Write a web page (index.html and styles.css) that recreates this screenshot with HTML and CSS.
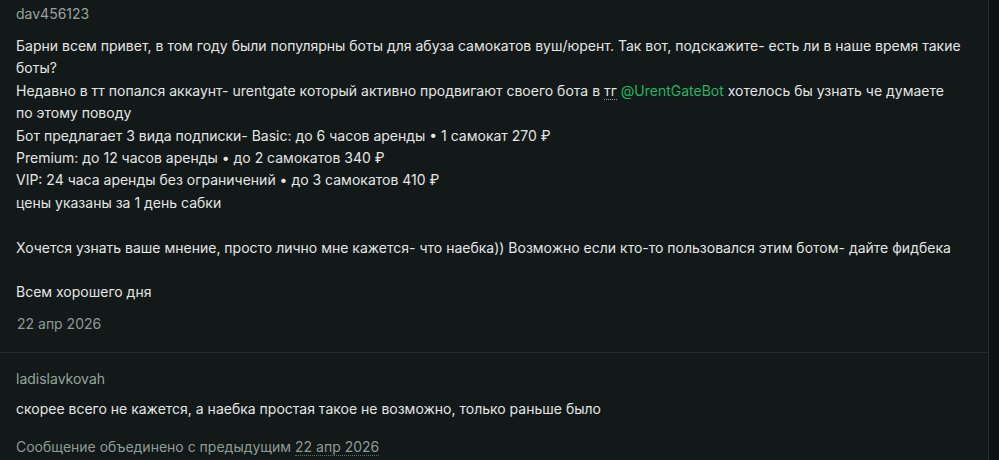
FILE: index.html
```html
<!DOCTYPE html>
<html lang="ru">
<head>
<meta charset="utf-8">
<link rel="stylesheet" href="styles.css">
</head>
<body>
<div class="layout">
  <main class="thread">
    <article class="post post-first">
      <div class="author">dav456123</div>
      <div class="message">Барни всем привет, в том году были популярны боты для абуза самокатов вуш/юрент. Так вот, подскажите- есть ли в наше время такие боты?<br>Недавно в тт попался аккаунт- urentgate который активно продвигают своего бота в <abbr class="abbr" title="телеграм">тг</abbr> <a class="link" href="#">@UrentGateBot</a> хотелось бы узнать че думаете по этому поводу<br>Бот предлагает 3 вида подписки- Basic: до 6 часов аренды • 1 самокат 270 ₽<br>Premium: до 12 часов аренды • до 2 самокатов 340 ₽<br>VIP: 24 часа аренды без ограничений • до 3 самокатов 410 ₽<br>цены указаны за 1 день сабки<br><br>Хочется узнать ваше мнение, просто лично мне кажется- что наебка)) Возможно если кто-то пользовался этим ботом- дайте фидбека<br><br>Всем хорошего дня</div>
      <div class="meta">22 апр 2026</div>
    </article>
    <article class="post post-second">
      <div class="author">ladislavkovah</div>
      <div class="message">скорее всего не кажется, а наебка простая такое не возможно, только раньше было</div>
      <div class="meta">Сообщение объединено с предыдущим <span class="dotted">22 апр 2026</span></div>
    </article>
  </main>
  <aside class="side"></aside>
</div>
</body>
</html>
```

FILE: styles.css
```css
html, body {
  margin: 0;
  padding: 0;
  background: #0e1111;
}
body {
  font-family: Inter, "Noto Sans", sans-serif;
  color: #e2e6e5;
  height: 460px;
  overflow: hidden;
}
.layout {
  display: flex;
  height: 460px;
}
.thread {
  width: 988px;
  flex: none;
  background: #131818;
  border-right: 1px solid #262c2c;
}
.side {
  flex: 1;
}
.post {
  padding: 0 26px 0 16px;
}
.post-first {
  padding-top: 4px;
  padding-bottom: 18px;
}
.post-second {
  border-top: 1px solid #262c2c;
  padding-top: 16px;
}
.author {
  font-size: 14px;
  line-height: 20px;
  color: #95a59d;
}
.message {
  margin-top: 11px;
  font-size: 14px;
  line-height: 22.4px;
  color: #e2e6e5;
}
.post-second .message {
  margin-top: 9px;
}
.meta {
  margin-top: 10px;
  font-size: 14px;
  line-height: 20px;
  color: #8d9c94;
  padding-left: 1px;
}
.post-second .meta {
  margin-top: 17px;
  padding-left: 0;
}
.abbr {
  text-decoration: none;
  border-bottom: 1px dotted #8d9c94;
}
.link {
  color: #22b566;
  text-decoration: none;
}
.dotted {
  border-bottom: 1px dotted #5d6b64;
}
```
